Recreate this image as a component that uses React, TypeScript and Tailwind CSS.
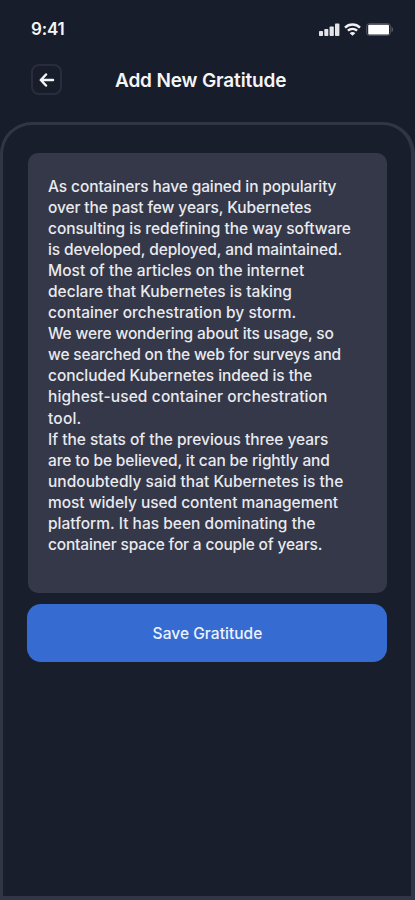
import { Fragment } from 'react';

type Line = { text: string; className: string };

const lines: Line[] = [
	{ text: 'As containers have gained in popularity', className: 'tracking-[-0.11px]' },
	{ text: 'over the past few years, Kubernetes', className: 'tracking-[-0.11px]' },
	{ text: 'consulting is redefining the way software', className: 'tracking-[-0.05px]' },
	{ text: 'is developed, deployed, and maintained.', className: 'tracking-[-0.11px]' },
	{ text: 'Most of the articles on the internet', className: 'tracking-[0.03px]' },
	{ text: 'declare that Kubernetes is taking', className: 'tracking-[0.01px]' },
	{ text: 'container orchestration by storm.', className: 'tracking-[0.04px]' },
	{ text: 'We were wondering about its usage, so', className: 'tracking-[-0.15px]' },
	{ text: 'we searched on the web for surveys and', className: 'tracking-[-0.2px]' },
	{ text: 'concluded Kubernetes indeed is the', className: 'tracking-[-0.07px]' },
	{ text: 'highest-used container orchestration', className: 'tracking-[0.12px]' },
	{ text: 'tool.', className: 'tracking-[0.2px]' },
	{ text: 'If the stats of the previous three years', className: 'tracking-[-0.02px]' },
	{ text: 'are to be believed, it can be rightly and', className: 'tracking-[-0.13px]' },
	{ text: 'undoubtedly said that Kubernetes is the', className: 'tracking-[0.02px]' },
	{ text: 'most widely used content management', className: 'tracking-[-0.04px]' },
	{ text: 'platform. It has been dominating the', className: 'tracking-[0.01px]' },
	{ text: 'container space for a couple of years.', className: 'tracking-[-0.17px]' },
];

const StatusBar = () => (
	<div className="flex h-[58px] items-center justify-between pl-[31px] pr-[21px]">
		<span className="pt-[2px] text-[17px] font-semibold tracking-[-0.2px]">9:41</span>
		<div className="flex items-center">
			<svg width="21" height="13" viewBox="0 0 21 13" fill="#e4e4e8">
				<rect x="0" y="8" width="4" height="5" rx="0.8" />
				<rect x="5.3" y="6" width="4" height="7" rx="0.8" />
				<rect x="10.6" y="3.5" width="4.2" height="9.5" rx="0.8" />
				<rect x="16" y="0.6" width="4.4" height="12.4" rx="0.8" />
			</svg>
			<svg className="ml-1" width="17" height="13" viewBox="0 0 17 13" fill="none" stroke="#f2f2f4" strokeWidth="2.4">
				<path d="M1 4.6a10.8 10.8 0 0 1 15 0" />
				<path d="M3.9 7.7a6.7 6.7 0 0 1 9.2 0" />
				<path d="M8.5 12.8 5.7 10.2a3.8 3.8 0 0 1 5.6 0z" fill="#f2f2f4" stroke="none" />
			</svg>
			<svg className="ml-[5px]" width="28" height="13" viewBox="0 0 28 13">
				<rect x="0.7" y="0.7" width="23.6" height="11.6" rx="2.5" fill="none" stroke="#565863" />
				<rect x="2.2" y="1.8" width="20.8" height="9.6" rx="1" fill="#fff" />
				<path d="M25.5 3.8c2.2 1 2.2 4.4 0 5.4z" fill="#565863" />
			</svg>
		</div>
	</div>
);

const Header = () => (
	<header className="flex h-16 items-start pl-[31px] pt-[6px]">
		<button
			aria-label="Back"
			className="flex size-[31px] items-center justify-center rounded-lg border-2 border-[#2a2c3b]"
		>
			<svg width="16" height="14" viewBox="0 0 16 14" fill="none" stroke="#f4f4f6" strokeWidth="2.5" strokeLinecap="round" strokeLinejoin="round">
				<path d="M7 1.5 1.8 7 7 12.5M2 7h12" />
			</svg>
		</button>
		<h1 className="ml-[53px] mt-[3px] whitespace-nowrap text-[19px] font-semibold leading-7 tracking-[-0.14px]">
			Add New Gratitude
		</h1>
	</header>
);

const App = () => {
	return (
		<div className="flex h-[900px] w-[415px] flex-col overflow-hidden bg-[#181d2b] font-[Inter,sans-serif] text-[#f5f5f7]">
			<StatusBar />
			<Header />
			<main className="flex-1 rounded-t-[32px] border-[3px] border-r-4 border-b-4 border-[#323545] bg-[#181e2b] px-6 pt-7">
				<div className="ml-px h-[440px] rounded-[10px] bg-[#353848] pl-5 pt-[23px] text-[15.5px] font-medium leading-[21.04px] text-[#e9eaef]">
					{lines.map(({ text, className }) => (
						<Fragment key={text}>
							<span className={`whitespace-nowrap ${className}`}>{text}</span>
							<br />
						</Fragment>
					))}
				</div>
				<button className="mt-[11px] h-[58px] w-full rounded-[14px] bg-[#366bd2] pt-px pl-px text-[15.5px] font-medium tracking-[0.04px] text-[#edf2ff]">
					Save Gratitude
				</button>
			</main>
		</div>
	);
};

export default App;
